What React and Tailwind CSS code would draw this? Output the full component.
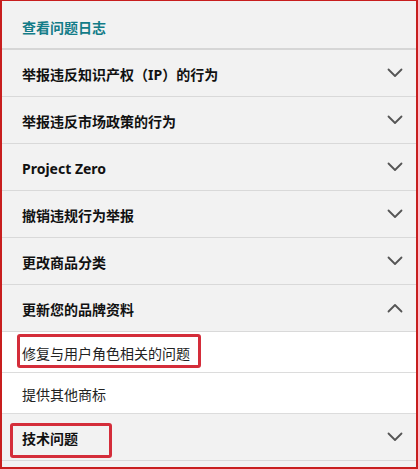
import React from "react";

const Chevron = ({ up }) => (
  <svg width="16" height="10" viewBox="0 0 16 10" className="shrink-0">
    <path
      d={up ? "M1.5 8.5 L8 2 L14.5 8.5" : "M1.5 1.5 L8 8 L14.5 1.5"}
      fill="none"
      stroke="#555"
      strokeWidth="1.8"
      strokeLinecap="round"
      strokeLinejoin="round"
    />
  </svg>
);

const Row = ({ label, up }) => (
  <div className="flex h-[47px] items-center justify-between border-b border-[#d9d9d9] pl-[20px] pr-[13px]">
    <span className="pt-[3px] text-[14px] font-bold text-[#111]">{label}</span>
    <Chevron up={up} />
  </div>
);

const SubRow = ({ label }) => (
  <div className="flex h-[41px] items-center border-b border-[#dcdcdc] bg-white pl-[20px]">
    <span className="pt-[2px] text-[14px] text-[#222]">{label}</span>
  </div>
);

export default function App() {
  return (
    <div
      className="relative h-[469px] w-[418px] overflow-hidden border-t border-l-2 border-r-2 border-b-2 border-[#c81e1e] bg-[#f2f2f2]"
      style={{ fontFamily: '"Noto Sans", "Noto Sans CJK SC", sans-serif' }}
    >
      <div className="flex h-[49px] items-center border-b-2 border-[#d6d6d6] pl-[20px]">
        <span className="pt-[5px] text-[14px] font-semibold text-[#137c88]">查看问题日志</span>
      </div>
      <Row label="举报违反知识产权（IP）的行为" />
      <Row label="举报违反市场政策的行为" />
      <Row label="Project Zero" />
      <Row label="撤销违规行为举报" />
      <Row label="更改商品分类" />
      <Row label="更新您的品牌资料" up />
      <SubRow label="修复与用户角色相关的问题" />
      <SubRow label="提供其他商标" />
      <Row label="技术问题" />
      <div className="pointer-events-none absolute left-[15px] top-[333px] h-[34px] w-[184px] rounded-[3px] border-[3px] border-[#d42d3a]" />
      <div className="pointer-events-none absolute left-[8px] top-[422px] h-[35px] w-[102px] rounded-[3px] border-[3px] border-[#d42d3a]" />
    </div>
  );
}
